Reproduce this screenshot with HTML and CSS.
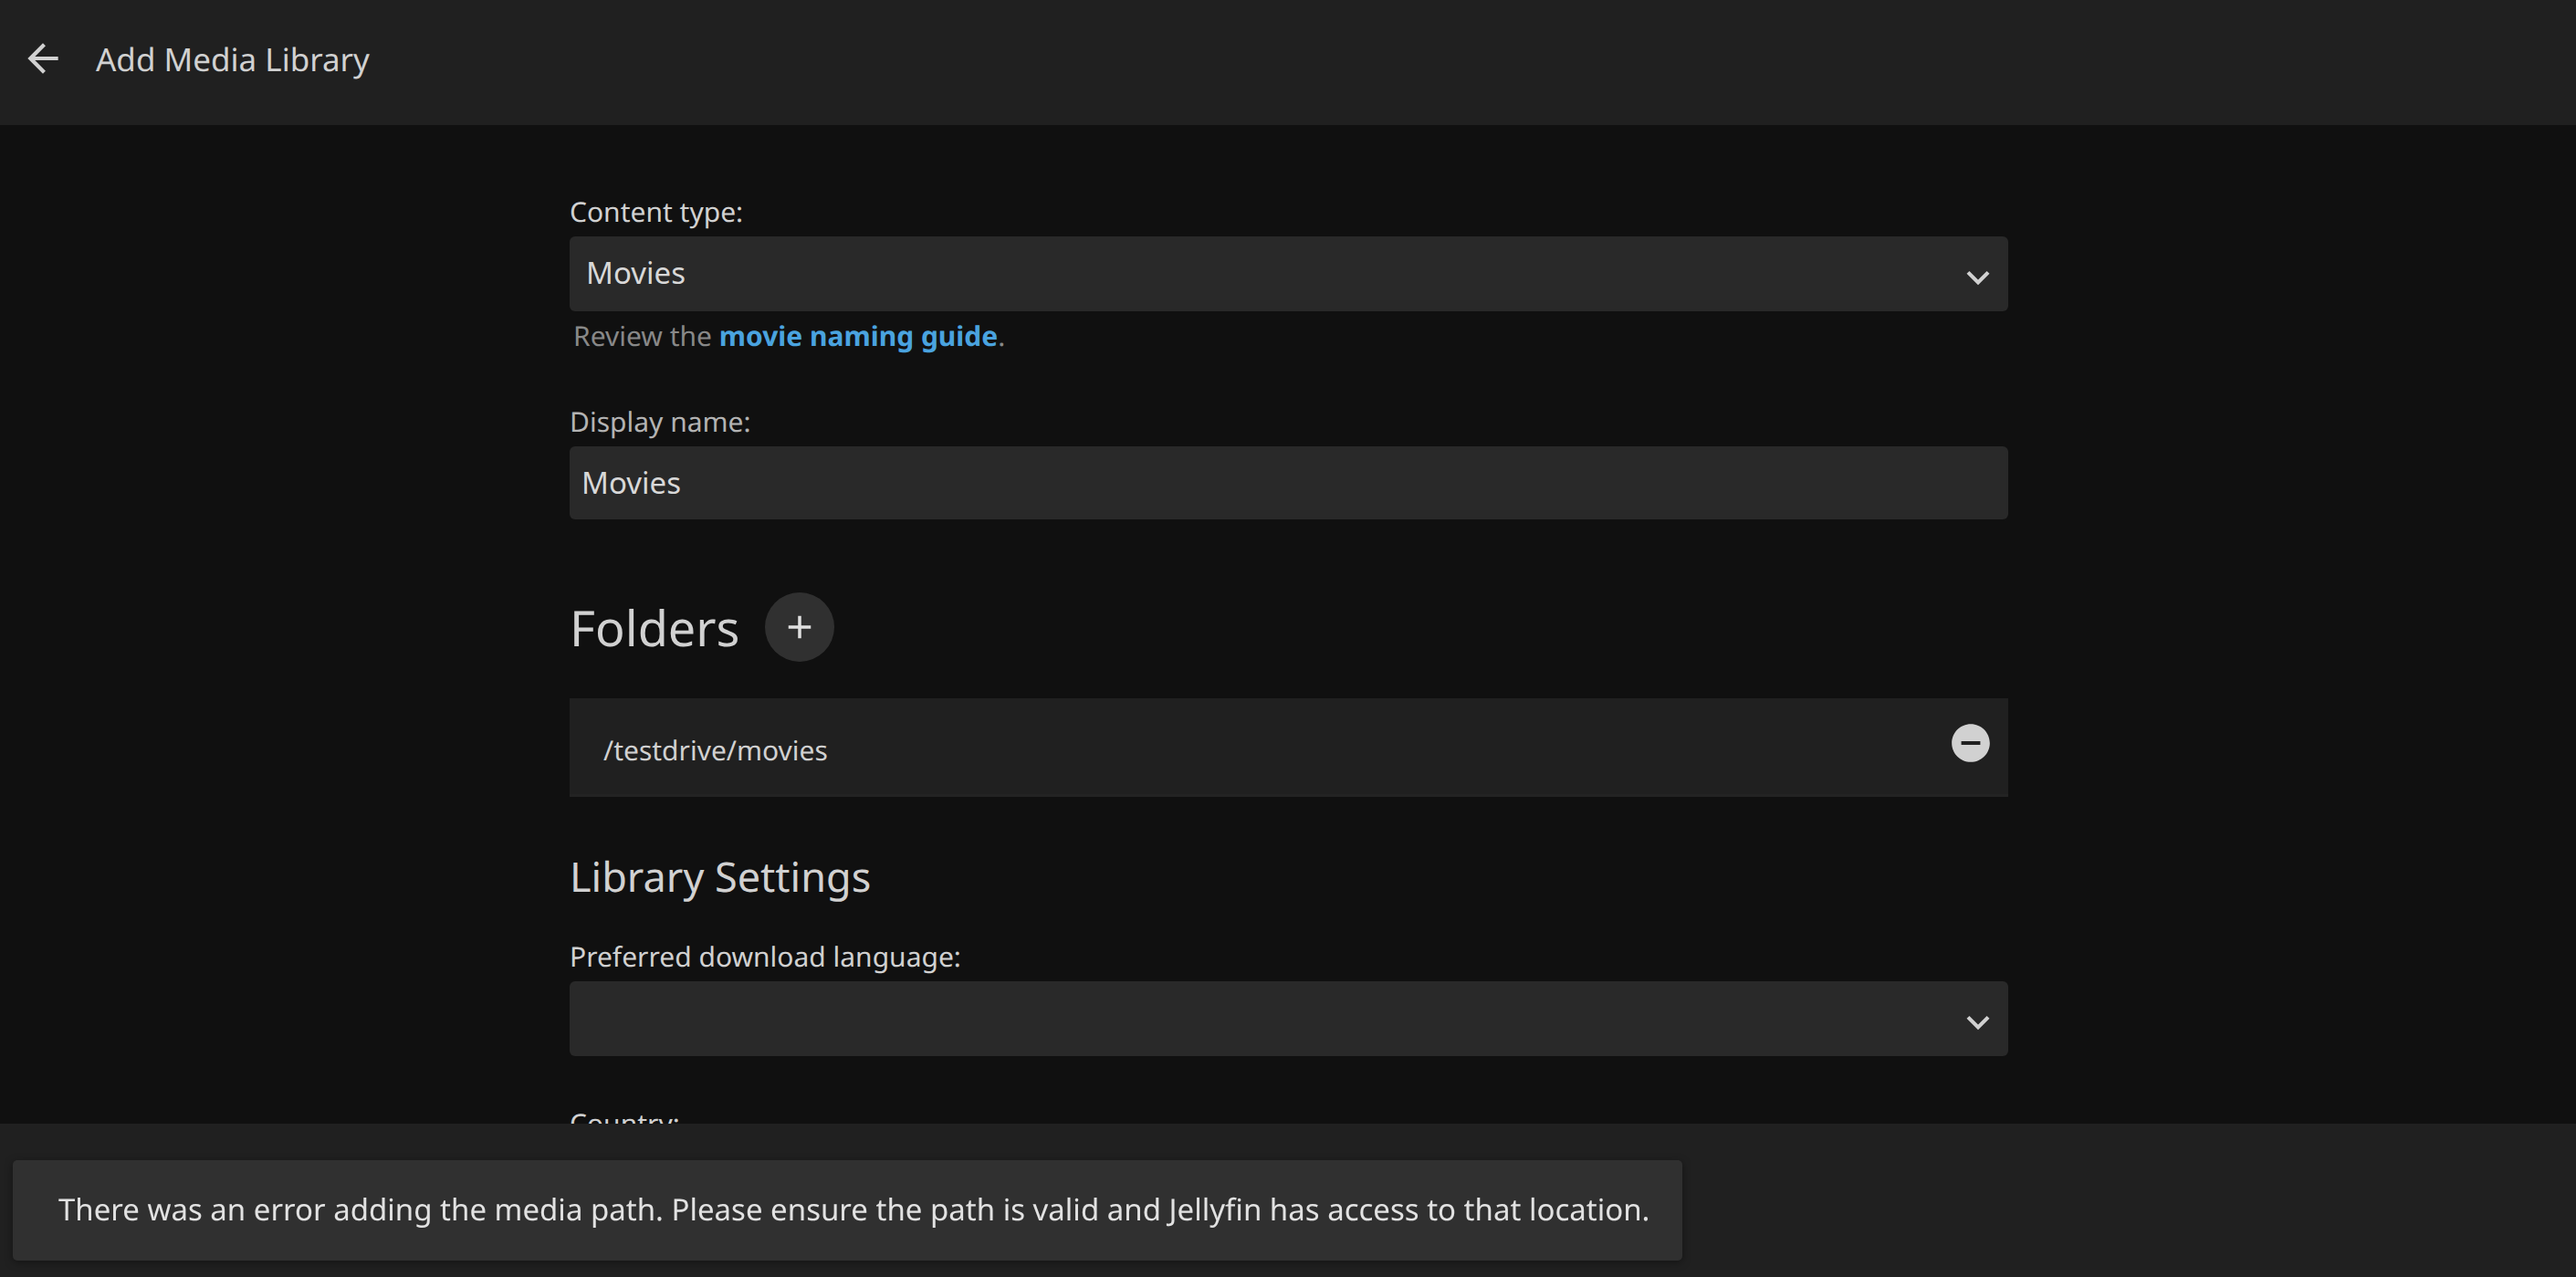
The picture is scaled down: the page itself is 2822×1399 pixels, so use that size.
FILE: index.html
```html
<!DOCTYPE html>
<html lang="en">
<head>
<meta charset="utf-8">
<title>Add Media Library</title>
<link rel="stylesheet" href="styles.css">
</head>
<body>
<header class="header">
  <button type="button" class="icon-button" aria-label="Back">
    <svg class="icon" viewBox="0 0 24 24"><path d="M20 11H7.83l5.59-5.59L12 4l-8 8 8 8 1.41-1.41L7.83 13H20v-2z"/></svg>
  </button>
  <h1 class="title">Add Media Library</h1>
</header>
<main class="content">
  <form class="form" id="library-form">
    <div class="field">
      <label for="content-type">Content type:</label>
      <div class="select">
        <select id="content-type"><option>Movies</option></select>
        <svg class="icon chevron" viewBox="0 0 24 24"><path d="M7.41 8.59L12 13.17l4.59-4.58L18 10l-6 6-6-6z"/></svg>
      </div>
      <p class="description">Review the <a href="#naming">movie naming guide</a>.</p>
    </div>
    <div class="field">
      <label class="label-muted" for="display-name">Display name:</label>
      <input class="text-input" id="display-name" type="text" value="Movies">
    </div>
    <div class="folders-heading">
      <h2>Folders</h2>
      <button type="button" class="add-button" aria-label="Add folder">
        <svg viewBox="0 0 24 24"><path d="M19 13h-6v6h-2v-6H5v-2h6V5h2v6h6z"/></svg>
      </button>
    </div>
    <ul class="folders">
      <li class="folder">
        <span class="folder-path">/testdrive/movies</span>
        <button type="button" class="icon-button" aria-label="Remove folder">
          <svg class="icon" viewBox="0 0 24 24"><path d="M12 2C6.48 2 2 6.48 2 12s4.48 10 10 10 10-4.48 10-10S17.52 2 12 2zm5 11H7v-2h10v2z"/></svg>
        </button>
      </li>
    </ul>
    <h3 class="section-title">Library Settings</h3>
    <div class="field">
      <label for="language">Preferred download language:</label>
      <div class="select">
        <select id="language"><option></option></select>
        <svg class="icon chevron" viewBox="0 0 24 24"><path d="M7.41 8.59L12 13.17l4.59-4.58L18 10l-6 6-6-6z"/></svg>
      </div>
    </div>
    <div class="field">
      <label for="country">Country:</label>
      <div class="select">
        <select id="country"><option></option></select>
        <svg class="icon chevron" viewBox="0 0 24 24"><path d="M7.41 8.59L12 13.17l4.59-4.58L18 10l-6 6-6-6z"/></svg>
      </div>
    </div>
  </form>
</main>
<footer class="footer"></footer>
<div class="toast" role="alert">There was an error adding the media path. Please ensure the path is valid and Jellyfin has access to that location.</div>
</body>
</html>
```
FILE: styles.css
```css
* {
  box-sizing: border-box;
  margin: 0;
}

body {
  display: flex;
  flex-direction: column;
  height: 100vh;
  overflow: hidden;
  background: #101010;
  color: #d1d1d1;
  font: 30px/40px "Noto Sans", sans-serif;
  text-rendering: geometricPrecision;
}

h1,
h2,
h3 {
  font-weight: 400;
}

button {
  padding: 0;
  border: 0;
  background: none;
  color: inherit;
}

svg {
  display: block;
  fill: currentColor;
}

.icon {
  width: 50px;
  height: 50px;
}

.header {
  display: flex;
  align-items: flex-start;
  gap: 33px;
  padding: 39px 22px 44px;
  background: #202020;
}

.title {
  font-size: 35px;
  line-height: 54px;
}

.content {
  flex: 1;
  min-height: 0;
  overflow: hidden;
  padding: 75px 40px 0 42px;
}

.form {
  max-width: 1576px;
  margin: 0 auto;
}

.field {
  margin-bottom: 54px;
}

.field label {
  display: block;
  margin-bottom: 7px;
}

.field .label-muted {
  color: #b3b3b3;
}

.select {
  position: relative;
}

.select select,
.text-input {
  display: block;
  width: 100%;
  height: 82px;
  padding: 0 13px 2px;
  border: 0;
  border-radius: 6px;
  background: #292929;
  color: #d8d8d8;
  font: inherit;
  font-size: 33px;
  appearance: none;
}

.select select {
  padding-left: 18px;
}

.text-input {
  height: 80px;
}

.chevron {
  position: absolute;
  top: 20px;
  right: 8px;
  pointer-events: none;
}

.description {
  padding: 7px 4px 0;
  color: #888;
}

.description a {
  color: #4aa3df;
  font-weight: 700;
  text-decoration: none;
}

.folders-heading {
  display: flex;
  align-items: center;
  gap: 28px;
  margin: 80px 0 40px;
}

.folders-heading h2 {
  font-size: 54px;
  line-height: 76px;
}

.add-button {
  display: grid;
  place-items: center;
  width: 76px;
  height: 76px;
  border-radius: 50%;
  background: #303030;
  color: #e0e0e0;
}

.add-button svg {
  width: 42px;
  height: 42px;
}

.folders {
  padding: 0;
  list-style: none;
}

.folder {
  display: flex;
  align-items: flex-start;
  justify-content: space-between;
  padding: 24px 16px 28px 37px;
  border-bottom: 3px solid #232323;
  background: #202020;
}

.folder-path {
  padding-top: 13px;
}

.section-title {
  margin: 58px 0 37px;
  font-size: 45px;
  line-height: 60px;
}

.footer {
  min-height: 168px;
  background: #202020;
}

.toast {
  position: fixed;
  bottom: 18px;
  left: 14px;
  padding: 32px 36px 34px 50px;
  border-radius: 5px;
  background: #303030;
  box-shadow: 0 2px 10px rgba(0, 0, 0, 0.4);
  color: #e2e2e2;
  font-size: 33px;
  line-height: 44px;
}
```
